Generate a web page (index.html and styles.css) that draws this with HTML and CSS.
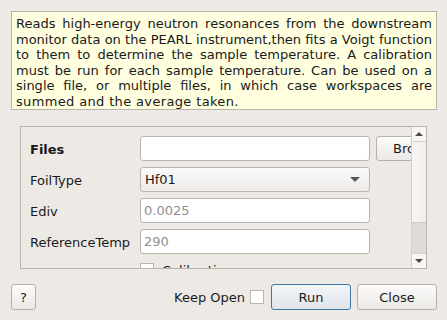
FILE: index.html
```html
<!DOCTYPE html>
<html lang="en">
<head>
    <meta charset="UTF-8">
    <meta name="viewport" content="width=device-width, initial-scale=1.0">
    <title>PEARLFMonitorTemperature</title>
    <link rel="stylesheet" href="styles.css">
</head>
<body>
    <div class="description">
        <span class="line">Reads high-energy neutron resonances from the downstream</span>
        <span class="line">monitor data on the PEARL instrument,then fits a Voigt function</span>
        <span class="line">to them to determine the sample temperature. A calibration</span>
        <span class="line">must be run for each sample temperature. Can be used on a</span>
        <span class="line">single file, or multiple files, in which case workspaces are</span>
        <span class="line last">summed and the average taken.</span>
    </div>

    <div class="scroll-frame">
        <div class="viewport">
            <div class="form-grid">
                <label class="bold">Files</label>
                <input type="text" class="field">
                <button class="btn browse">Browse</button>

                <label>FoilType</label>
                <div class="combo">
                    <span>Hf01</span>
                    <span class="arrow"></span>
                </div>
                <span></span>

                <label>Ediv</label>
                <input type="text" class="field" placeholder="0.0025">
                <span></span>

                <label>ReferenceTemp</label>
                <input type="text" class="field" placeholder="290">
                <span></span>

                <span></span>
                <div class="check-row"><span class="checkbox"></span>Calibration</div>
                <span></span>
            </div>
        </div>
        <div class="scrollbar">
            <div class="sb-btn"><span class="up"></span></div>
            <div class="sb-track"></div>
            <div class="sb-handle"></div>
            <div class="sb-btn bottom"><span class="down"></span></div>
        </div>
    </div>

    <div class="footer">
        <button class="btn help">?</button>
        <div class="spacer"></div>
        <span class="keep">Keep Open</span>
        <span class="checkbox"></span>
        <button class="btn run">Run</button>
        <button class="btn close">Close</button>
    </div>
</body>
</html>
```

FILE: styles.css
```css
body {
    margin: 0;
    padding: 11px 11px 0 11px;
    background: #edeae6;
    font-family: "DejaVu Sans", sans-serif;
    font-size: 13px;
    color: #1a1a1a;
    width: 426px;
    height: 309px;
    overflow: hidden;
}
.description {
    box-sizing: border-box;
    height: 99px;
    padding: 4px 4px 0 4px;
    background: #ffffe0;
    border: 1px solid #b9b5ae;
    line-height: 15.6px;
}
.line {
    display: block;
    white-space: nowrap;
    text-align: justify;
    text-align-last: justify;
}
.line.last {
    text-align-last: left;
    letter-spacing: 0.35px;
}
.scroll-frame {
    display: flex;
    box-sizing: border-box;
    margin: 16px 10px 0 9px;
    height: 143px;
    border: 1px solid #b9b5ae;
}
.viewport {
    flex: 1;
    overflow: hidden;
    padding: 9px 0 0 9px;
}
.form-grid {
    display: grid;
    grid-template-columns: 104px 230px 80px;
    column-gap: 6px;
    row-gap: 6px;
    grid-auto-rows: 25px;
    align-items: center;
}
label {
    padding-top: 1px;
}
.bold {
    font-weight: bold;
}
.field {
    box-sizing: border-box;
    height: 25px;
    width: 230px;
    margin: 0;
    padding: 0 3px;
    border: 1px solid #b9b5ae;
    border-radius: 3px;
    background: #ffffff;
    font-family: "DejaVu Sans", sans-serif;
    font-size: 13px;
}
.field::placeholder {
    color: #8f8f8f;
}
.combo {
    box-sizing: border-box;
    height: 25px;
    display: flex;
    align-items: center;
    justify-content: space-between;
    padding: 0 9px 0 4px;
    border: 1px solid #b9b5ae;
    border-radius: 3px;
    background: linear-gradient(#fbfaf9, #ecebe9);
}
.arrow {
    width: 0;
    height: 0;
    border-left: 5px solid transparent;
    border-right: 5px solid transparent;
    border-top: 5px solid #5a5a5a;
}
.btn {
    box-sizing: border-box;
    height: 26px;
    border: 1px solid #b5b1ab;
    border-radius: 3px;
    background: linear-gradient(#fcfbfa, #ebe9e6);
    font-family: "DejaVu Sans", sans-serif;
    font-size: 13px;
    color: #1a1a1a;
    padding: 0;
}
.browse {
    height: 25px;
    width: 80px;
    text-align: left;
    padding-left: 16px;
}
.check-row {
    display: flex;
    align-items: flex-start;
    gap: 8px;
    height: 25px;
    padding-top: 3px;
    box-sizing: border-box;
}
.checkbox {
    display: inline-block;
    box-sizing: border-box;
    width: 14px;
    height: 14px;
    border: 1px solid #b9b5ae;
    background: #ffffff;
}
.scrollbar {
    width: 14px;
    display: flex;
    flex-direction: column;
    border-left: 1px solid #d2cec9;
    background: #f5f3f1;
}
.sb-btn {
    height: 14px;
    display: flex;
    align-items: center;
    justify-content: center;
    border-bottom: 1px solid #d8d4cf;
    background: #f7f6f4;
}
.sb-btn.bottom {
    border-bottom: none;
    border-top: 1px solid #d8d4cf;
}
.sb-track {
    flex: 1;
    background: linear-gradient(to right, #f7f6f4, #f1efed);
}
.sb-handle {
    height: 30px;
    background: #dfdcd8;
    border-top: 1px solid #d0ccc7;
}
.up, .down {
    width: 0;
    height: 0;
    border-left: 4px solid transparent;
    border-right: 4px solid transparent;
}
.up {
    border-bottom: 4px solid #4a4a4a;
}
.down {
    border-top: 4px solid #4a4a4a;
}
.footer {
    display: flex;
    align-items: center;
    margin-top: 15px;
    height: 26px;
}
.help {
    width: 25px;
}
.spacer {
    flex: 1;
}
.keep {
    margin-right: 5px;
}
.run {
    width: 80px;
    margin-left: 7px;
    border-color: #3f78a6;
    background: linear-gradient(#f1f4f7, #e1e6eb);
}
.close {
    width: 80px;
    margin-left: 6px;
}
```
